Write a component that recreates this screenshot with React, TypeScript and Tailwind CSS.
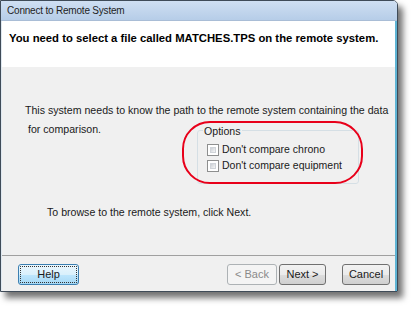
import React from "react";

const btnBase =
  "h-[21px] rounded-[3px] border text-[11px] leading-none flex items-center justify-center";
const btnNormal =
  "border-[#707070] bg-[linear-gradient(#f2f2f2_0%,#ebebeb_50%,#dddddd_51%,#cfcfcf_100%)] text-[#1a1a1a]";

function Checkbox({ label }: { label: string }) {
  return (
    <div className="flex items-center gap-[3px] h-[15px]">
      <div className="w-[12px] h-[12px] border border-[#8e8f8f] bg-white p-[2px]">
        <div className="w-full h-full bg-[linear-gradient(135deg,#cbcfd5,#f6f6f6)] border border-[#d0d4d9]" />
      </div>
      <span className="text-[10.5px] text-[#1a1a1a] leading-none">{label}</span>
    </div>
  );
}

export default function App() {
  return (
    <div
      className="w-[413px] h-[309px] bg-white relative"
      style={{ fontFamily: '"Liberation Sans", Arial, sans-serif' }}
    >
      <div className="w-[398px] h-[292px] flex flex-col border border-[#3f4b58] rounded-tr-[5px] shadow-[5px_6px_6px_rgba(0,0,0,0.55)] overflow-hidden">
        {/* Title bar */}
        <div className="h-[20px] shrink-0 flex items-center pl-[6px] bg-[linear-gradient(#cfdff2,#b6cde8)] border-b border-[#a9bdd6]">
          <span className="text-[10px] tracking-[-0.2px] text-[#1e1e1e] leading-none">
            Connect to Remote System
          </span>
        </div>
        {/* Inner */}
        <div className="flex-1 flex flex-col border-r-2 border-r-[#5fb4d4] border-l border-l-[#dfe8f0]">
          {/* Header */}
          <div className="h-[46px] shrink-0 bg-white flex items-start pl-[7px] pt-[12px]">
            <span className="text-[11.3px] font-bold text-black leading-none">
              You need to select a file called MATCHES.TPS on the remote system.
            </span>
          </div>
          {/* Body */}
          <div className="flex-1 bg-[#f0f0f0] flex flex-col">
            <div className="pl-[23px] pt-[38px] text-[10.6px] text-[#1a1a1a] leading-none whitespace-nowrap">
              This system needs to know the path to the remote system containing the data
            </div>
            <div className="flex items-start mt-[8px]">
              <div className="pl-[26px] text-[10.6px] text-[#1a1a1a] leading-none w-[195px] shrink-0">
                for comparison.
              </div>
              <div className="relative mt-[2px]">
                <fieldset className="w-[162px] h-[58px] border border-[#d5dfe5] rounded-[3px] pl-[9px] pr-0 pb-0">
                  <legend className="px-[1px] -ml-[4px] text-[10.6px] text-[#1a1a1a] leading-none">
                    Options
                  </legend>
                  <div className="flex flex-col pt-[6px] gap-[1px]">
                    <Checkbox label="Don't compare chrono" />
                    <Checkbox label="Don't compare equipment" />
                  </div>
                </fieldset>
                <div className="absolute left-[-15px] top-[-5px] w-[181px] h-[63px] rounded-[28px] border-2 border-[#e8001a] pointer-events-none" />
              </div>
            </div>
            <div className="pl-[45px] mt-[23px] text-[10.6px] text-[#1a1a1a] leading-none">
              To browse to the remote system, click Next.
            </div>
          </div>
          {/* Separator + buttons */}
          <div className="h-[36px] shrink-0 bg-[#f0f0f0] border-t border-[#a0a0a0] flex items-start pt-[8px] pl-[16px] pr-[5px]">
            <button
              className={`${btnBase} w-[61px] border-[#3c7fb1] bg-[linear-gradient(#eaf6fd_0%,#d9f0fc_50%,#bee6fd_51%,#a7d9f5_100%)] p-[1px]`}
            >
              <span className="w-full h-full flex items-center justify-center border border-dotted border-[#333] text-[#1a1a1a] rounded-[1px]">
                Help
              </span>
            </button>
            <div className="flex-1" />
            <button
              className={`${btnBase} w-[50px] border-[#adb2b5] bg-[#f4f4f4] text-[#8a8a8a]`}
            >
              &lt; Back
            </button>
            <button className={`${btnBase} ${btnNormal} w-[47px] ml-[2px]`}>
              Next &gt;
            </button>
            <button className={`${btnBase} ${btnNormal} w-[48px] ml-[16px]`}>
              Cancel
            </button>
          </div>
        </div>
      </div>
    </div>
  );
}
